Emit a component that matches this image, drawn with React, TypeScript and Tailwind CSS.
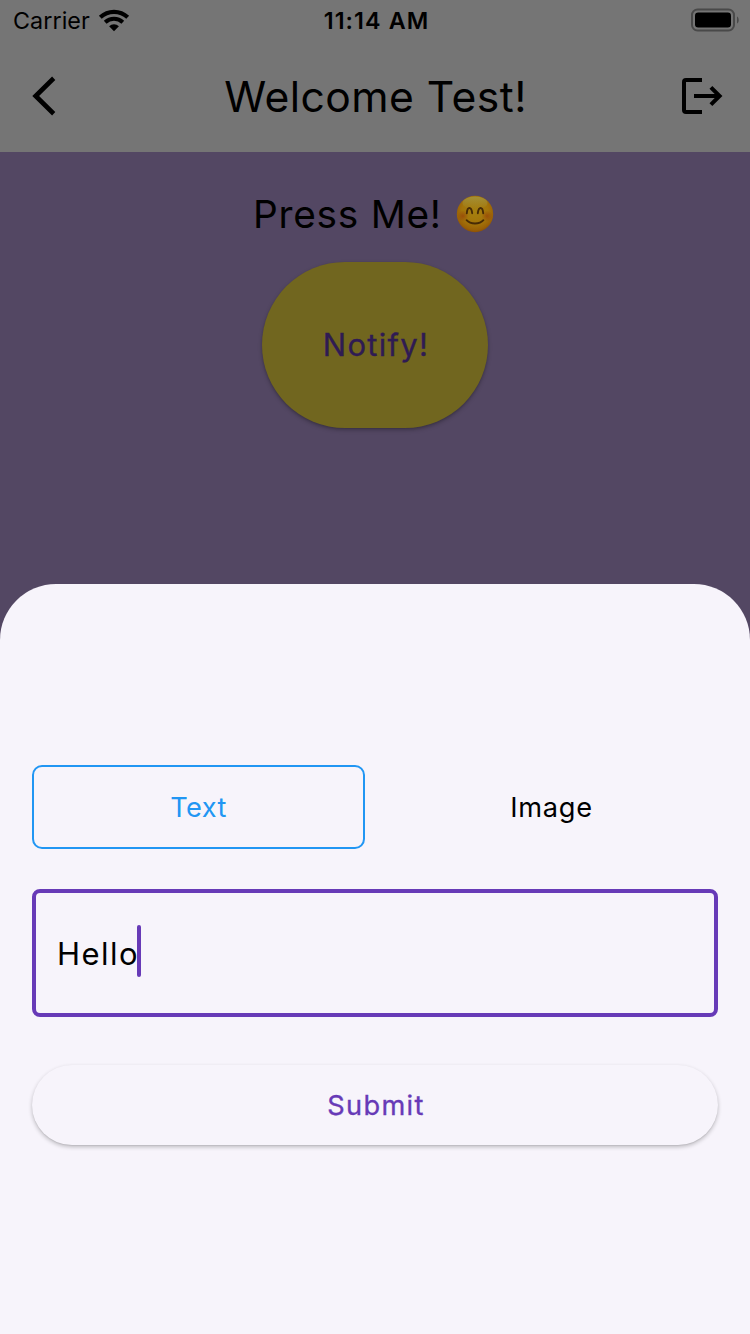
function WifiIcon() {
  return (
    <svg width="32" height="26" viewBox="0 0 32 26" fill="none" role="img" aria-label="Wi-Fi">
      <path d="M2.3 10.3A19.9 19.9 0 0 1 29.7 10.3" stroke="#000" strokeWidth="4.1" />
      <path d="M7.2 15.3A12.8 12.8 0 0 1 24.8 15.3" stroke="#000" strokeWidth="4" />
      <path d="M16 24.2L11.1 19.3A7 7 0 0 1 20.9 19.3Z" fill="#000" />
    </svg>
  );
}

function BatteryIcon() {
  return (
    <svg width="50" height="24" viewBox="0 0 50 24" fill="none" role="img" aria-label="Battery full">
      <rect x="2" y="1.5" width="42" height="21" rx="5.5" stroke="#494949" strokeWidth="2" />
      <rect x="5" y="4.5" width="36" height="15" rx="3.2" fill="#000" />
      <path d="M47 8.5C49.3 9.5 49.3 14.5 47 15.5Z" fill="#494949" />
    </svg>
  );
}

function BackIcon() {
  return (
    <svg width="24" height="40" viewBox="0 0 24 40" role="img" aria-label="Back">
      <path d="M20.1 0.6L23.3 3.9L7.1 20L23.3 36.1L20.1 39.4L0.3 20Z" fill="#000" />
    </svg>
  );
}

function LogoutIcon() {
  return (
    <svg width="42" height="38" viewBox="0 0 42 38" fill="none" stroke="#000" role="img" aria-label="Log out">
      <path d="M21 3H5Q3 3 3 5V33Q3 35 5 35H21" strokeWidth="4" />
      <path d="M13 19H38" strokeWidth="4" />
      <path d="M29.9 10.3L38.6 19L29.9 27.7" strokeWidth="4" />
    </svg>
  );
}

function SmileEmoji() {
  return (
    <svg width="38" height="38" viewBox="0 0 38 38" fill="none" role="img" aria-label="😊">
      <defs>
        <radialGradient id="face" cx="0.5" cy="0.42" r="0.6">
          <stop offset="0" stopColor="#a5800f" />
          <stop offset="0.6" stopColor="#a3740a" />
          <stop offset="0.85" stopColor="#9a6106" />
          <stop offset="1" stopColor="#8a4c04" />
        </radialGradient>
        <radialGradient id="cheek">
          <stop offset="0" stopColor="#984608" stopOpacity="0.8" />
          <stop offset="1" stopColor="#984608" stopOpacity="0" />
        </radialGradient>
        <linearGradient id="shine" x1="0" y1="0" x2="0" y2="1">
          <stop offset="0" stopColor="#a3943c" stopOpacity="0.9" />
          <stop offset="1" stopColor="#a3943c" stopOpacity="0" />
        </linearGradient>
      </defs>
      <circle cx="19" cy="19" r="18.2" fill="url(#face)" />
      <ellipse cx="19" cy="8" rx="12.5" ry="6.5" fill="url(#shine)" />
      <circle cx="6.8" cy="21" r="5.6" fill="url(#cheek)" />
      <circle cx="31.2" cy="21" r="5.6" fill="url(#cheek)" />
      <path d="M10.8 18.2C11.3 11.2 15.4 11.2 16.2 18.2" stroke="#472b06" strokeWidth="1.9" strokeLinecap="round" />
      <path d="M21.8 18.2C22.6 11.2 26.7 11.2 27.2 18.2" stroke="#472b06" strokeWidth="1.9" strokeLinecap="round" />
      <path d="M10.6 25.2C14.4 29.6 23.6 29.6 27.4 25.2" stroke="#472b06" strokeWidth="1.9" strokeLinecap="round" />
    </svg>
  );
}

function StatusBar() {
  return (
    <div className="flex h-10 items-center justify-between pr-[10px] pl-[13px]">
      <div className="flex w-[200px] items-center gap-[8.5px]">
        <span className="pt-0.5 text-[23.3px] leading-none tracking-[0.07px]">Carrier</span>
        <WifiIcon />
      </div>
      <span className="pt-0.5 text-[23.3px] leading-none font-semibold tracking-[1.1px]">11:14 AM</span>
      <div className="flex w-[200px] justify-end">
        <BatteryIcon />
      </div>
    </div>
  );
}

function Header() {
  return (
    <header className="h-[152px] bg-[#757575]">
      <StatusBar />
      <div className="flex h-28 items-center justify-between pr-[27px] pl-8">
        <div className="w-[42px]">
          <BackIcon />
        </div>
        <h1 className="pt-[2px] pr-[4px] text-[42.6px] leading-none tracking-[0.47px]">Welcome Test!</h1>
        <LogoutIcon />
      </div>
    </header>
  );
}

function Sheet() {
  return (
    <section className="flex h-[750px] flex-col rounded-t-[56px] bg-[#f7f4fb] px-8 pt-[181px]">
      <div className="flex justify-between text-[27.2px] leading-none">
        <button className="h-[84px] w-[333px] rounded-[10px] border-2 border-[#2196f3] pt-px tracking-[0.35px] text-[#2196f3]">
          Text
        </button>
        <button className="h-[84px] w-[333px] pt-px tracking-[0.74px]">Image</button>
      </div>
      <div className="mt-10 flex h-32 items-center rounded-[8px] border-4 border-[#673ab7] pl-[21px]">
        <span className="pt-px text-[31px] leading-none tracking-[1.47px]">Hello</span>
        <span className="mb-1 -ml-[2px] h-[52px] w-1 rounded-full bg-[#673ab7]" />
      </div>
      <button className="mt-12 h-20 rounded-full bg-[#f7f4fb] pt-px pl-[2px] text-[27.2px] leading-none tracking-[1.3px] text-[#673ab7] shadow-[0_2px_4px_rgba(0,0,0,0.24),0_1px_1px_rgba(0,0,0,0.06)] [-webkit-text-stroke:0.35px]">
        Submit
      </button>
    </section>
  );
}

export default function App() {
  return (
    <div className="flex h-[1334px] w-[750px] flex-col overflow-hidden bg-[#534763] font-['Inter',sans-serif] text-black">
      <Header />
      <main className="flex h-[432px] flex-col items-center">
        <div className="mt-[38px] flex h-12 items-center gap-[14.5px] pr-[2.8px]">
          <p className="text-[38.8px] leading-none tracking-[0.75px]">Press Me!</p>
          <SmileEmoji />
        </div>
        <button className="mt-6 h-[166px] w-[226px] rounded-full bg-[#71661f] pb-[2px] pl-[2px] text-[31px] leading-none tracking-[1.3px] text-[#2f1b53] shadow-[0_2px_4px_rgba(0,0,0,0.25),0_1px_2px_rgba(0,0,0,0.1)] [-webkit-text-stroke:0.35px]">
          Notify!
        </button>
      </main>
      <Sheet />
    </div>
  );
}
